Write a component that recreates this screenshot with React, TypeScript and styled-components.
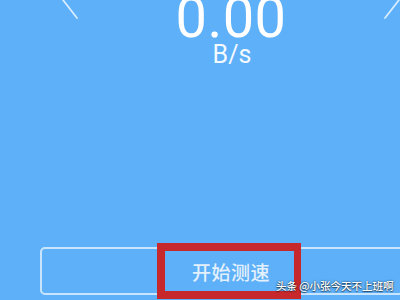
import React from 'react';
import styled, { createGlobalStyle } from 'styled-components';

const GlobalStyle = createGlobalStyle`
  html, body {
    margin: 0;
    padding: 0;
    background: #5eb0f8;
  }
  body {
    font-family: Roboto, "Noto Sans CJK SC", sans-serif;
  }
`;

const Screen = styled.div`
  width: 400px;
  height: 300px;
  overflow: hidden;
  background: #5eb0f8;
  position: relative;
`;

// the phone screen is cropped, its centre sits at x=231
const Stage = styled.div`
  width: 462px;
  height: 300px;
  display: flex;
  flex-direction: column;
`;

const Gauge = styled.div`
  position: relative;
  height: 247px;
  display: flex;
  flex-direction: column;
  align-items: center;
`;

const Ticks = styled.svg`
  position: absolute;
  top: 0;
  left: 0;
`;

const Speed = styled.div`
  margin-top: -4px;
  font-size: 56px;
  line-height: 44px;
  font-weight: 400;
  color: #ffffff;
  letter-spacing: 0.5px;
`;

const Unit = styled.div`
  margin-top: 5px;
  font-size: 25px;
  line-height: 20px;
  font-weight: 400;
  color: #f4f9ff;
  padding-left: 2px;
`;

const Footer = styled.div`
  position: relative;
  padding: 0 40px;
`;

const StartButton = styled.button`
  width: 100%;
  height: 48px;
  box-sizing: border-box;
  border: 2px solid #c9e5fd;
  border-radius: 5px;
  background: transparent;
  color: #e4f1fd;
  font-family: "Noto Sans CJK SC", sans-serif;
  font-size: 19px;
  font-weight: 500;
  letter-spacing: 0.5px;
  padding: 0;
  display: flex;
  align-items: center;
  justify-content: center;
`;

const Highlight = styled.div`
  position: absolute;
  left: 157px;
  top: -4px;
  width: 144px;
  height: 56px;
  box-sizing: border-box;
  border: 8px solid #c7282b;
  border-right-width: 7px;
`;

const Watermark = styled.div`
  position: absolute;
  left: 276px;
  top: 280px;
  font-family: "Noto Sans CJK SC", sans-serif;
  font-size: 10.5px;
  font-weight: 500;
  line-height: 12px;
  color: #ffffff;
  text-shadow: 0 0 2px rgba(0, 0, 0, 0.7), 0 1px 1px rgba(0, 0, 0, 0.5);
  white-space: nowrap;
`;

export default function App() {
  return (
    <>
      <GlobalStyle />
      <Screen>
        <Stage>
          <Gauge>
            <Ticks width="462" height="30" viewBox="0 0 462 30">
              <line x1="63" y1="0" x2="77" y2="18" stroke="#d8edff" strokeWidth="1.8" strokeLinecap="round" />
              <line x1="399" y1="0" x2="385" y2="18" stroke="#d8edff" strokeWidth="1.8" strokeLinecap="round" />
            </Ticks>
            <Speed>0.00</Speed>
            <Unit>B/s</Unit>
          </Gauge>
          <Footer>
            <StartButton>开始测速</StartButton>
            <Highlight />
          </Footer>
        </Stage>
        <Watermark>头条 @小张今天不上班啊</Watermark>
      </Screen>
    </>
  );
}
